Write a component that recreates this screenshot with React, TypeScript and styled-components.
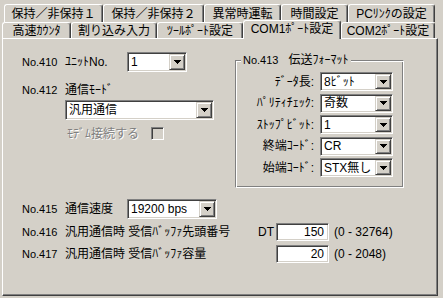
import { Fragment } from "react";
import styled, { createGlobalStyle } from "styled-components";

const FACE = "#d4d0c8";

const GlobalStyle = createGlobalStyle`
  body {
    margin: 0;
    background: ${FACE};
  }
`;

const Screen = styled.div`
  width: 443px;
  height: 298px;
  box-sizing: border-box;
  padding-top: 4px;
  background: ${FACE};
  font-family: "Liberation Sans", "Noto Sans CJK JP", sans-serif;
  font-size: 12px;
  line-height: 14px;
  color: #000;
  overflow: hidden;
`;

const TabRow = styled.div<{ $indent: number; $h: number }>`
  display: flex;
  height: ${p => p.$h}px;
  padding-left: ${p => p.$indent}px;
`;

const Tab = styled.div<{ $w: number; $active?: boolean }>`
  flex: none;
  box-sizing: border-box;
  width: ${p => p.$w}px;
  height: ${p => (p.$active ? "19px" : "100%")};
  margin-top: ${p => (p.$active ? "-2px" : "0")};
  padding-bottom: ${p => (p.$active ? "2px" : "0")};
  position: ${p => (p.$active ? "relative" : "static")};
  z-index: ${p => (p.$active ? 1 : "auto")};
  background: ${FACE};
  border-top: 1px solid #fff;
  border-left: 1px solid #fff;
  border-right: 1px solid #404040;
  box-shadow: inset -1px 0 0 #808080;
  border-radius: 3px 3px 0 0;
  display: flex;
  align-items: center;
  justify-content: center;
  white-space: nowrap;
`;

const Panel = styled.div`
  margin-left: 2px;
  width: 436px;
  height: 258px;
  box-sizing: border-box;
  border: 1px solid;
  border-color: #fff #404040 #404040 #fff;
  box-shadow: inset -1px -1px 0 #808080;
  padding: 13px 0 0 19px;
`;

const TopArea = styled.div`
  display: flex;
  align-items: flex-start;
`;

const LeftCol = styled.div`
  width: 213px;
  flex: none;
  display: flex;
  flex-direction: column;
`;

const Row = styled.div<{ $h: number; $top?: number; $indent?: number }>`
  display: flex;
  align-items: center;
  height: ${p => p.$h}px;
  margin-top: ${p => p.$top ?? 0}px;
  margin-left: ${p => p.$indent ?? 0}px;
  white-space: nowrap;
`;

const Label = styled.span<{ $w?: number; $latin?: boolean }>`
  flex: none;
  width: ${p => (p.$w ? `${p.$w}px` : "auto")};
  font-size: ${p => (p.$latin ? "11px" : "12px")};
`;

const Disabled = styled.span<{ $w: number }>`
  flex: none;
  width: ${p => p.$w}px;
  color: #808080;
  text-shadow: 1px 1px 0 #fff;
`;

const Sunken = styled.div<{ $w: number; $h: number }>`
  flex: none;
  box-sizing: border-box;
  width: ${p => p.$w}px;
  height: ${p => p.$h}px;
  background: #fff;
  border: 1px solid;
  border-color: #808080 #fff #fff #808080;
  box-shadow: inset 1px 1px 0 #404040, inset -1px -1px 0 ${FACE};
  padding: 1px;
  display: flex;
  align-items: center;
`;

const ComboValue = styled.span`
  flex: 1;
  padding-left: 2px;
  white-space: nowrap;
`;

const DropButton = styled.div`
  flex: none;
  box-sizing: border-box;
  width: 16px;
  height: 100%;
  background: ${FACE};
  border: 1px solid;
  border-color: ${FACE} #404040 #404040 ${FACE};
  box-shadow: inset 1px 1px 0 #fff, inset -1px -1px 0 #808080;
  display: flex;
  align-items: center;
  justify-content: center;
`;

const EditValue = styled.span`
  flex: 1;
  text-align: right;
  padding-right: 3px;
`;

const CheckBox = styled.div`
  flex: none;
  box-sizing: border-box;
  width: 13px;
  height: 13px;
  background: ${FACE};
  border: 1px solid;
  border-color: #808080 #fff #fff #808080;
  box-shadow: inset 1px 1px 0 #404040, inset -1px -1px 0 ${FACE};
`;

const GroupBox = styled.fieldset`
  flex: none;
  box-sizing: border-box;
  width: 169px;
  margin: 2px 0 0 0;
  min-width: 0;
  padding: 6px 10px 10px 0;
  border: 1px solid;
  border-color: #808080 #fff #fff #808080;
  box-shadow: inset 1px 1px 0 #fff, inset -1px -1px 0 #808080;
  display: grid;
  grid-template-columns: 78px 73px;
  column-gap: 6px;
  grid-auto-rows: 19px;
  row-gap: 2.5px;
`;

const Legend = styled.legend`
  margin-left: 5px;
  padding: 0 2px;
  line-height: 12px;
  background: ${FACE};
  white-space: nowrap;
`;

const LegendNo = styled.span`
  margin-right: 10px;
  font-size: 11px;
`;

const FieldLabel = styled.span`
  align-self: center;
  text-align: right;
  white-space: nowrap;
`;

const BottomArea = styled.div`
  margin-top: 11px;
  display: flex;
  flex-direction: column;
`;

const Range = styled.span`
  margin-left: 5px;
`;

function Arrow() {
  return (
    <svg width="7" height="4" viewBox="0 0 7 4" shapeRendering="crispEdges">
      <rect x="0" y="0" width="7" height="1" fill="#000" />
      <rect x="1" y="1" width="5" height="1" fill="#000" />
      <rect x="2" y="2" width="3" height="1" fill="#000" />
      <rect x="3" y="3" width="1" height="1" fill="#000" />
    </svg>
  );
}

function Combo({ w, h = 20, value }: { w: number; h?: number; value: string }) {
  return (
    <Sunken $w={w} $h={h}>
      <ComboValue>{value}</ComboValue>
      <DropButton>
        <Arrow />
      </DropButton>
    </Sunken>
  );
}

function Edit({ value }: { value: string }) {
  return (
    <Sunken $w={53} $h={18}>
      <EditValue>{value}</EditValue>
    </Sunken>
  );
}

const backTabs = [
  { label: "保持／非保持１", w: 99 },
  { label: "保持／非保持２", w: 101 },
  { label: "異常時運転", w: 77 },
  { label: "時間設定", w: 67 },
  { label: "PCﾘﾝｸの設定", w: 87 },
];

const frontTabs = [
  { label: "高速ｶｳﾝﾀ", w: 69 },
  { label: "割り込み入力", w: 86 },
  { label: "ﾂｰﾙﾎﾟｰﾄ設定", w: 86 },
  { label: "COM1ﾎﾟｰﾄ設定", w: 98, active: true },
  { label: "COM2ﾎﾟｰﾄ設定", w: 94 },
];

const formatRows = [
  { label: "ﾃﾞｰﾀ長:", value: "8ﾋﾞｯﾄ" },
  { label: "ﾊﾟﾘﾃｨﾁｪｯｸ:", value: "奇数" },
  { label: "ｽﾄｯﾌﾟﾋﾞｯﾄ:", value: "1" },
  { label: "終端ｺｰﾄﾞ:", value: "CR" },
  { label: "始端ｺｰﾄﾞ:", value: "STX無し" },
];

export default function App() {
  return (
    <Screen>
      <GlobalStyle />
      <TabRow $indent={4} $h={18}>
        {backTabs.map(t => (
          <Tab key={t.label} $w={t.w}>{t.label}</Tab>
        ))}
      </TabRow>
      <TabRow $indent={2} $h={16}>
        {frontTabs.map(t => (
          <Tab key={t.label} $w={t.w} $active={t.active}>{t.label}</Tab>
        ))}
      </TabRow>
      <Panel>
        <TopArea>
          <LeftCol>
            <Row $h={20}>
              <Label $w={43} $latin>No.410</Label>
              <Label $w={62}>ﾕﾆｯﾄNo.</Label>
              <Combo w={60} value="1" />
            </Row>
            <Row $h={14} $top={11}>
              <Label $w={43} $latin>No.412</Label>
              <Label>通信ﾓｰﾄﾞ</Label>
            </Row>
            <Row $h={20} $top={3} $indent={43}>
              <Combo w={149} value="汎用通信" />
            </Row>
            <Row $h={13} $top={7} $indent={45}>
              <Disabled $w={84}>ﾓﾃﾞﾑ接続する</Disabled>
              <CheckBox />
            </Row>
          </LeftCol>
          <GroupBox>
            <Legend>
              <LegendNo>No.413</LegendNo>伝送ﾌｫｰﾏｯﾄ
            </Legend>
            {formatRows.map(r => (
              <Fragment key={r.label}>
                <FieldLabel>{r.label}</FieldLabel>
                <Combo w={73} h={19} value={r.value} />
              </Fragment>
            ))}
          </GroupBox>
        </TopArea>
        <BottomArea>
          <Row $h={20}>
            <Label $w={43} $latin>No.415</Label>
            <Label $w={62}>通信速度</Label>
            <Combo w={90} value="19200 bps" />
          </Row>
          <Row $h={18} $top={4}>
            <Label $w={43} $latin>No.416</Label>
            <Label $w={193}>汎用通信時 受信ﾊﾞｯﾌｧ先頭番号</Label>
            <Label $w={18}>DT</Label>
            <Edit value="150" />
            <Range>(0 - 32764)</Range>
          </Row>
          <Row $h={18} $top={4}>
            <Label $w={43} $latin>No.417</Label>
            <Label $w={193}>汎用通信時 受信ﾊﾞｯﾌｧ容量</Label>
            <Label $w={18} />
            <Edit value="20" />
            <Range>(0 - 2048)</Range>
          </Row>
        </BottomArea>
      </Panel>
    </Screen>
  );
}
